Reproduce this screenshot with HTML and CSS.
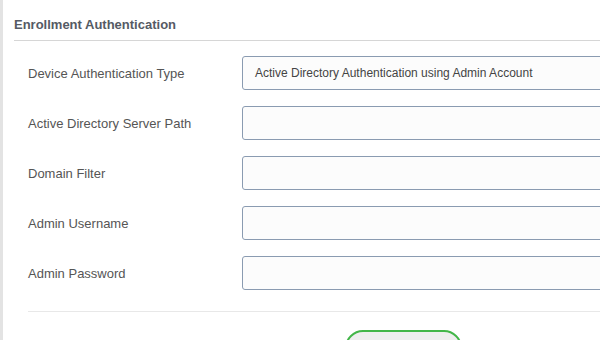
FILE: index.html
```html
<!DOCTYPE html>
<html>
<head>
<meta charset="utf-8">
<link rel="stylesheet" href="styles.css">
</head>
<body>
<div class="page">
  <div class="strip"></div>
  <main class="main">
    <h2 class="title">Enrollment Authentication</h2>
    <form class="form">
      <div class="row">
        <label class="label">Device Authentication Type</label>
        <div class="field select">Active Directory Authentication using Admin Account</div>
      </div>
      <div class="row">
        <label class="label">Active Directory Server Path</label>
        <div class="field"></div>
      </div>
      <div class="row">
        <label class="label">Domain Filter</label>
        <div class="field"></div>
      </div>
      <div class="row">
        <label class="label">Admin Username</label>
        <div class="field"></div>
      </div>
      <div class="row row-last">
        <label class="label">Admin Password</label>
        <div class="field"></div>
      </div>
      <div class="sep"></div>
      <div class="actions">
        <button type="button" class="btn" aria-label="Save"></button>
      </div>
    </form>
  </main>
</div>
</body>
</html>
```
FILE: styles.css
```css
html, body {
  margin: 0;
  padding: 0;
  width: 600px;
  height: 340px;
  overflow: hidden;
  background: #ffffff;
}
.page {
  display: flex;
  height: 340px;
  width: 900px;
  font-family: "Liberation Sans", Arial, sans-serif;
}
.strip {
  width: 3px;
  background: #e3e3e3;
  flex: none;
}
.main {
  flex: 1;
  padding-left: 11px;
}
.title {
  margin: 0;
  padding-top: 17px;
  padding-bottom: 7px;
  font-size: 13px;
  line-height: 16px;
  font-weight: bold;
  color: #555a64;
  border-bottom: 1px solid #d6d6d6;
}
.form {
  padding-left: 14px;
  padding-top: 15px;
  display: flex;
  flex-direction: column;
}
.row {
  display: flex;
  align-items: center;
  height: 34px;
  margin-bottom: 16px;
}
.row-last {
  margin-bottom: 21px;
}
.label {
  width: 214px;
  flex: none;
  font-size: 13px;
  color: #555;
}
.field {
  flex: 1;
  height: 32px;
  box-sizing: content-box;
  border: 1px solid #8a9bb1;
  border-radius: 3px;
  background: #fcfcfc;
  font-size: 12px;
  color: #444;
  display: flex;
  align-items: center;
  padding-left: 12px;
}
.sep {
  height: 1px;
  background: #e8e8e8;
}
.actions {
  padding-top: 18px;
  padding-left: 317px;
}
.btn {
  display: block;
  width: 117px;
  height: 36px;
  border: 2px solid #43b649;
  border-radius: 18px;
  background: #eeeeee;
}
```
